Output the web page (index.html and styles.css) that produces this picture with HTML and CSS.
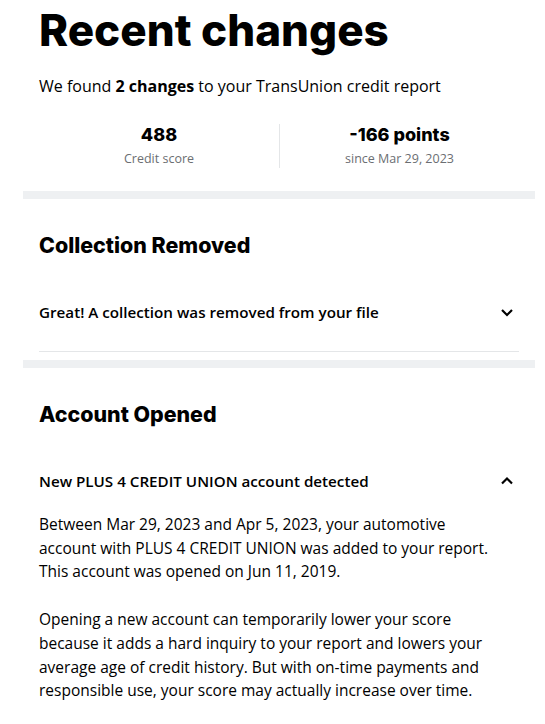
FILE: index.html
```html
<!DOCTYPE html>
<html lang="en">
<head>
<meta charset="utf-8">
<title>Recent changes</title>
<link rel="stylesheet" href="styles.css">
</head>
<body>
<main class="page">
  <header class="summary">
    <h1 class="title">Recent changes</h1>
    <p class="lead">We found <strong>2 changes</strong> to your TransUnion credit report</p>
    <div class="stats">
      <div class="stat">
        <div class="stat-value">488</div>
        <div class="stat-label">Credit score</div>
      </div>
      <div class="stat">
        <div class="stat-value">-166 points</div>
        <div class="stat-label">since Mar 29, 2023</div>
      </div>
    </div>
  </header>

  <section class="change">
    <h2 class="change-title">Collection Removed</h2>
    <div class="item">
      <div class="item-head">
        <span class="item-text">Great! A collection was removed from your file</span>
        <svg class="chev" width="14" height="14" viewBox="0 0 14 14"><path d="M2 5l5 5 5-5" fill="none" stroke="#000" stroke-width="2.2"/></svg>
      </div>
    </div>
  </section>

  <section class="change">
    <h2 class="change-title">Account Opened</h2>
    <div class="item open">
      <div class="item-head">
        <span class="item-text">New PLUS 4 CREDIT UNION account detected</span>
        <svg class="chev" width="14" height="14" viewBox="0 0 14 14"><path d="M2 9.5l5-5 5 5" fill="none" stroke="#000" stroke-width="2.2"/></svg>
      </div>
      <div class="item-body">
        <p>Between Mar 29, 2023 and Apr 5, 2023, your automotive account with PLUS 4 CREDIT UNION was added to your report. This account was opened on Jun 11, 2019.</p>
        <p>Opening a new account can temporarily lower your score because it adds a hard inquiry to your report and lowers your average age of credit history. But with on-time payments and responsible use, your score may actually increase over time.</p>
      </div>
    </div>
  </section>
</main>
</body>
</html>
```

FILE: styles.css
```css
* { box-sizing: border-box; }
html, body { margin: 0; padding: 0; background: #fff; }
body {
  font-family: "Open Sans", "Noto Sans", sans-serif;
  color: #000;
  overflow: hidden;
}
.page {
  margin-left: 23px;
  width: 512px;
}
.summary {
  padding: 0 16px 23px;
}
.title {
  font-family: Inter, "Liberation Sans", sans-serif;
  font-weight: 800;
  font-size: 44px;
  line-height: 60px;
  margin: 0;
}
.lead {
  margin: 14px 0 0;
  font-size: 16px;
  line-height: 24px;
}
.lead strong { font-weight: 700; }
.stats {
  display: grid;
  grid-template-columns: 1fr 1fr;
  margin-top: 26px;
}
.stat {
  text-align: center;
}
.stat + .stat {
  border-left: 1px solid #e4e6e8;
}
.stat-value {
  font-family: Inter, "Liberation Sans", sans-serif;
  font-weight: 800;
  font-size: 18px;
  line-height: 22px;
}
.stat-label {
  margin-top: 4px;
  font-size: 12.5px;
  line-height: 18px;
  color: #6b6e72;
}
.change {
  border-top: 8px solid #eef0f2;
  padding: 0 16px 8px;
}
.change-title {
  font-family: Inter, "Liberation Sans", sans-serif;
  font-weight: 800;
  font-size: 21.4px;
  line-height: 28px;
  margin: 32px 0 0;
}
.item {
  border-bottom: 1px solid #e4e6e8;
}
.item.open { border-bottom: none; }
.item-head {
  display: flex;
  align-items: center;
  justify-content: space-between;
  padding: 42px 0 28px;
}
.item-text {
  font-size: 15.2px;
  font-weight: 600;
  line-height: 22px;
}
.chev { margin-right: 5px; }
.open .item-head { padding-top: 42px; padding-bottom: 21px; }
.item-body p {
  max-width: 460px;
  margin: 0 0 24px;
  font-size: 15.5px;
  line-height: 23.7px;
}
```
